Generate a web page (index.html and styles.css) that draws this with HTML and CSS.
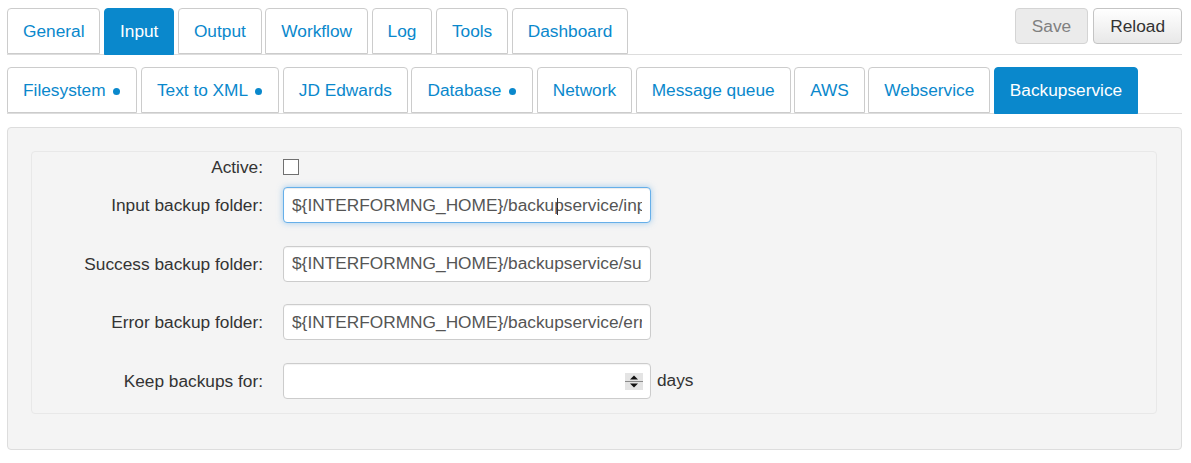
FILE: index.html
```html
<!DOCTYPE html>
<html lang="en">
<head>
<meta charset="utf-8">
<title>Input - Backupservice</title>
<link rel="stylesheet" href="styles.css">
</head>
<body>
<div class="page">
  <div class="topbar">
    <ul class="tabs main-tabs">
      <li><a>General</a></li>
      <li class="active"><a>Input</a></li>
      <li><a>Output</a></li>
      <li><a>Workflow</a></li>
      <li><a>Log</a></li>
      <li><a>Tools</a></li>
      <li><a>Dashboard</a></li>
    </ul>
    <div class="actions">
      <button class="btn btn-disabled" type="button">Save</button>
      <button class="btn" type="button">Reload</button>
    </div>
  </div>

  <ul class="tabs sub-tabs">
    <li><a>Filesystem <span class="dot"></span></a></li>
    <li><a>Text to XML <span class="dot"></span></a></li>
    <li><a>JD Edwards</a></li>
    <li><a>Database <span class="dot"></span></a></li>
    <li><a>Network</a></li>
    <li><a>Message queue</a></li>
    <li><a>AWS</a></li>
    <li><a>Webservice</a></li>
    <li class="active"><a>Backupservice</a></li>
  </ul>

  <div class="panel">
    <div class="well">
      <div class="row row-check">
        <label class="label">Active:</label>
        <input class="checkbox" type="checkbox">
      </div>
      <div class="row row-first">
        <label class="label">Input backup folder:</label>
        <div class="field">
          <input class="control focused" type="text" value="${INTERFORMNG_HOME}/backupservice/input">
          <span class="caret"></span>
        </div>
      </div>
      <div class="row">
        <label class="label">Success backup folder:</label>
        <div class="field">
          <input class="control" type="text" value="${INTERFORMNG_HOME}/backupservice/success">
        </div>
      </div>
      <div class="row">
        <label class="label">Error backup folder:</label>
        <div class="field">
          <input class="control" type="text" value="${INTERFORMNG_HOME}/backupservice/error">
        </div>
      </div>
      <div class="row">
        <label class="label">Keep backups for:</label>
        <div class="field">
          <input class="control" type="text" value="">
          <span class="spinner">
            <svg width="18" height="17" viewBox="0 0 18 17">
              <rect x="0" y="0" width="18" height="17" fill="#e4e4e4"/>
              <line x1="0" y1="8.5" x2="18" y2="8.5" stroke="#8a8a8a" stroke-width="1"/>
              <polygon points="9,2.5 13,6.5 5,6.5" fill="#111"/>
              <polygon points="5,10.5 13,10.5 9,14.5" fill="#111"/>
            </svg>
          </span>
        </div>
        <span class="unit">days</span>
      </div>
    </div>
  </div>
</div>
</body>
</html>
```

FILE: styles.css
```css
* {
  box-sizing: border-box;
}

html, body {
  margin: 0;
  padding: 0;
  background: #ffffff;
}

body {
  font-family: "Liberation Sans", Arial, sans-serif;
  font-size: 17.3px;
  color: #333333;
}

.page {
  padding: 8px 9px 0 7px;
}

.topbar {
  display: flex;
  align-items: flex-start;
  justify-content: space-between;
  border-bottom: 1px solid #dddddd;
}

.tabs {
  list-style: none;
  margin: 0;
  padding: 0;
  display: flex;
  align-items: flex-start;
  gap: 3.5px;
  height: 46px;
}

.tabs a {
  display: block;
  padding: 10px 15px;
  line-height: 24px;
  height: 46px;
  color: #0a88cc;
  border: 1px solid #cccccc;
  border-radius: 4px 4px 0 0;
  background: #ffffff;
  white-space: nowrap;
}

.tabs .active a {
  height: 47px;
  background: #0a88cc;
  border-color: #0a88cc;
  color: #ffffff;
}

.dot {
  display: inline-block;
  width: 7px;
  height: 7px;
  border-radius: 50%;
  background: #0a88cc;
  margin-left: 3px;
  margin-right: 1px;
  vertical-align: 1px;
}

.actions {
  display: flex;
  gap: 5px;
}

.btn {
  font-family: "Liberation Sans", Arial, sans-serif;
  font-size: 17.3px;
  height: 36px;
  padding: 0 16px;
  border: 1px solid #c4c4c4;
  border-radius: 4px;
  color: #333333;
  background: linear-gradient(#ffffff, #e8e8e8);
  line-height: 34px;
}

.btn-disabled {
  color: #808080;
  background: #ebebeb;
  border-color: #d4d4d4;
}

.sub-tabs {
  margin-top: 12px;
  border-bottom: 1px solid #dddddd;
  height: 47px;
}

.panel {
  margin-top: 13px;
  background: #f4f4f4;
  border: 1px solid #dddddd;
  border-radius: 4px;
  padding: 23px 24px 36px 23px;
  height: 323px;
}

.well {
  border: 1px solid #e8e8e8;
  border-radius: 4px;
  background: #f4f4f4;
  padding: 7px 0 14px 0;
}

.row {
  display: flex;
  align-items: center;
  margin-top: 22.5px;
}

.row-check {
  margin-top: 0;
  height: 16px;
}

.row-first {
  margin-top: 12px;
}

.label {
  width: 231px;
  margin-right: 20px;
  text-align: right;
  color: #333333;
  line-height: 20px;
  white-space: nowrap;
}

.checkbox {
  appearance: none;
  -webkit-appearance: none;
  width: 16px;
  height: 16px;
  margin: 0;
  border: 1px solid #707070;
  background: #ffffff;
  border-radius: 0;
}

.field {
  position: relative;
  width: 368px;
  height: 36px;
}

.control {
  display: block;
  width: 368px;
  height: 36px;
  margin: 0;
  padding: 0 8px;
  font-family: "Liberation Sans", Arial, sans-serif;
  font-size: 17.3px;
  color: #555555;
  background: #ffffff;
  border: 1px solid #cccccc;
  border-radius: 4px;
  box-shadow: inset 0 1px 1px rgba(0, 0, 0, 0.05);
  outline: none;
}

.control.focused {
  border-color: #66afe9;
  box-shadow: inset 0 1px 1px rgba(0, 0, 0, 0.075), 0 0 6px rgba(102, 175, 233, 0.6);
}

.caret {
  position: absolute;
  left: 274px;
  top: 11px;
  width: 1px;
  height: 17px;
  background: #333333;
}

.spinner {
  position: absolute;
  right: 8px;
  top: 10px;
  width: 18px;
  height: 17px;
  display: block;
}

.spinner svg {
  display: block;
}

.unit {
  margin-left: 6px;
  color: #333333;
}
```
